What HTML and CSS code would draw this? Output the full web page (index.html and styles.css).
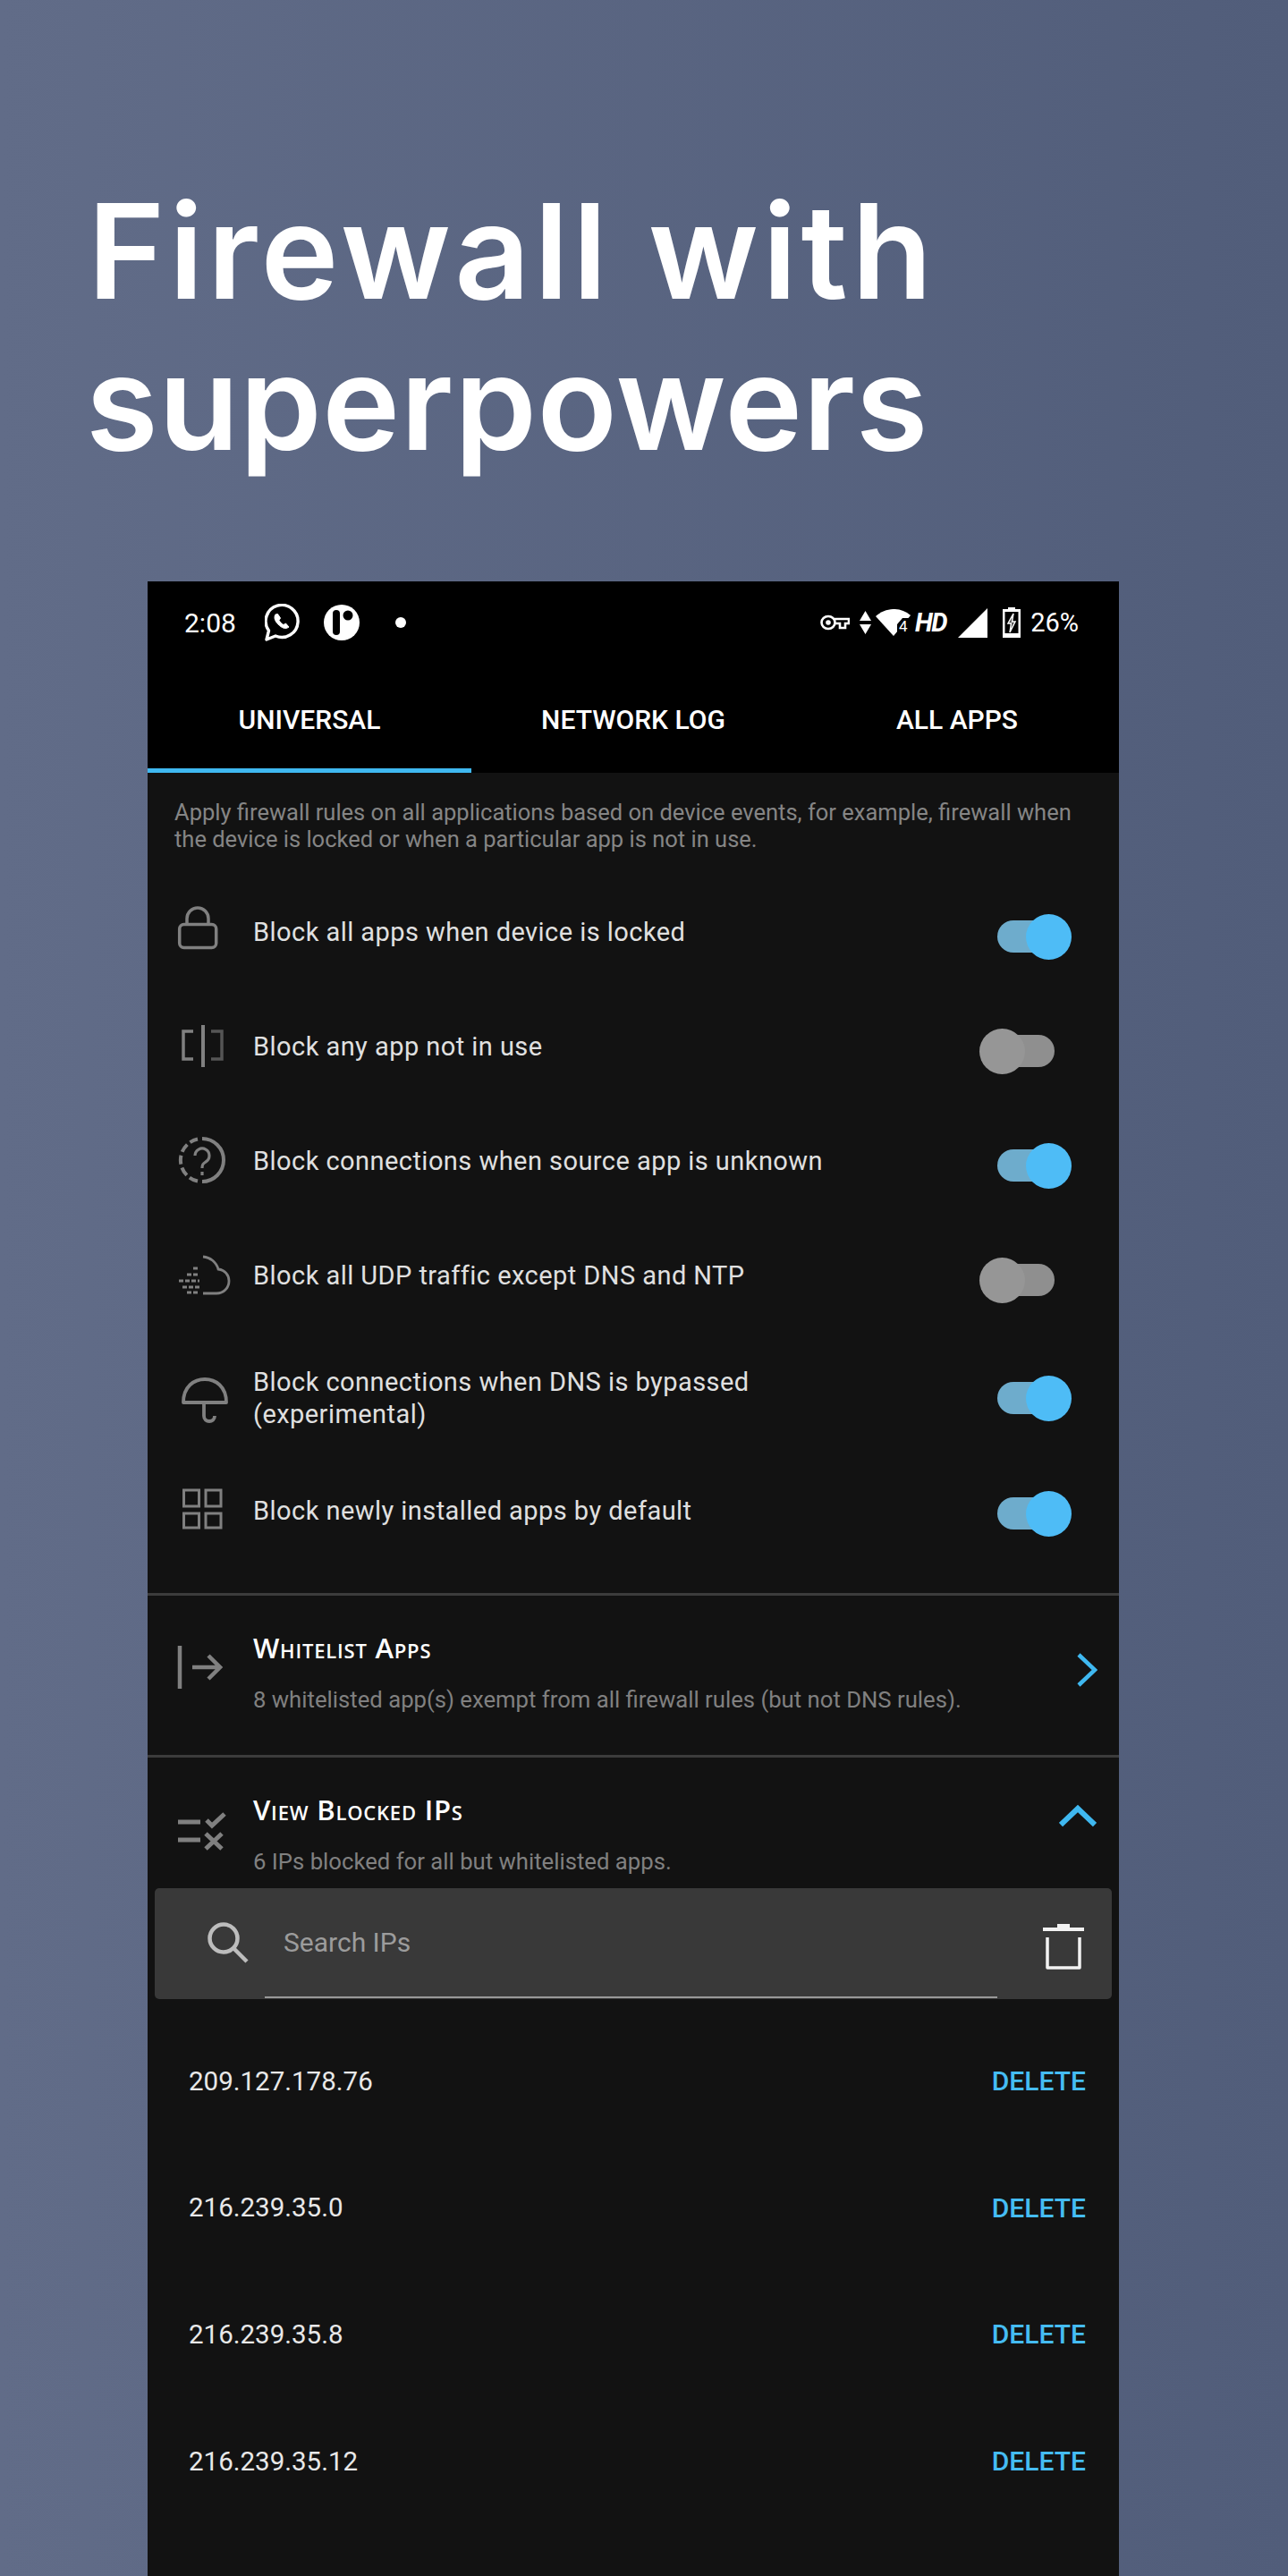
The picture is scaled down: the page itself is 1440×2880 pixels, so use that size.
FILE: index.html
```html
<!DOCTYPE html>
<html lang="en">
<head>
  <meta charset="UTF-8" />
  <title>Firewall with superpowers</title>
  <link rel="stylesheet" href="styles.css">
</head>
<body>
  <h1 class="headline"><span class="line-one">Firewall with</span><span class="line-two">superpowers</span></h1>

  <div class="phone">
    <div class="status-bar">
      <div class="status-left">
        <span class="time">2:08</span>
        <svg class="st-whatsapp" width="40" height="42" viewBox="0 0 40 42" fill="none" stroke="#fff" stroke-width="3.4"><path d="M2 40l2.500-10A18 18 0 1 1 12 36z" stroke-linejoin="round"/><path d="M12 12c-2 3-1 7 3 11s8 6 12 3l-3.500-4-2.500 1.500c-2-1-4-3-5-5l1.500-2.500-3-4.500z" fill="#fff" stroke-width="1"/></svg>
        <svg class="st-app" width="40" height="40" viewBox="0 0 40 40"><ellipse cx="20" cy="20" rx="20" ry="20" fill="#fff"/><rect x="10" y="6" width="8" height="28" rx="4" fill="#000"/><circle cx="27" cy="12" r="5.500" fill="#000"/></svg>
        <span class="dot"></span>
      </div>
      <div class="status-right">
        <svg class="st-key" width="33" height="18" viewBox="0 0 33 18" fill="none" stroke="#fff" stroke-width="2.600"><ellipse cx="9" cy="9" rx="7.500" ry="7"/><circle cx="9" cy="9" r="1.500"/><path d="M16 5h16v5h-4v5h-6v-5h-6"/></svg>
        <svg class="st-updown" width="13" height="26" viewBox="0 0 13 26" fill="#fff"><path d="M6.500 0L13 11H0zM6.500 26L0 15h13z"/></svg>
        <svg class="st-wifi" width="39" height="30" viewBox="0 0 39 30"><path d="M0 8C11-2 28-3 39 7L20 30z" fill="#fff"/><path d="M39 10H30L24 17v13h15z" fill="#000"/><text x="26" y="25" class="wifi-four">4</text></svg>
        <span class="hd">HD</span>
        <svg class="st-signal" width="33" height="33" viewBox="0 0 33 33"><path d="M33 0v33H0z" fill="#fff"/></svg>
        <svg class="st-battery" width="20" height="34" viewBox="0 0 20 34"><path d="M6 0h8v2h6v32H0V2h6z" fill="#fff"/><rect x="2.500" y="5" width="15" height="24" fill="#000"/><path d="M12 7L6 18h3.500L8 28l6-12h-3.500z" fill="#444" stroke="#fff" stroke-width="1.500"/></svg>
        <span class="battery-pct">26%</span>
      </div>
    </div>

    <div class="tabs">
      <div class="tab tab-active">UNIVERSAL</div>
      <div class="tab">NETWORK LOG</div>
      <div class="tab">ALL APPS</div>
    </div>

    <div class="content">
      <p class="intro">Apply firewall rules on all applications based on device events, for example, firewall when the device is locked or when a particular app is not in use.</p>

      <div class="rules">
        <div class="rule">
          <svg class="rule-icon" width="70" height="70" viewBox="0 0 70 70" fill="none" stroke="#808080" stroke-width="3.500"><rect x="3.700" y="23.500" width="41" height="26" rx="5"/><path d="M12 23v-6a12 12 0 0 1 24 0v6"/></svg>
          <span class="rule-label">Block all apps when device is locked</span>
          <span class="toggle on"><span class="knob"></span></span>
        </div>
        <div class="rule">
          <svg class="rule-icon" width="70" height="70" viewBox="0 0 70 70" fill="none" stroke="#808080" stroke-width="3.500"><path d="M19 15H8v31h11"/><path d="M30 8v47" stroke-width="4"/><path d="M39 15h12v31H39" stroke="#555"/></svg>
          <span class="rule-label">Block any app not in use</span>
          <span class="toggle"><span class="knob"></span></span>
        </div>
        <div class="rule">
          <svg class="rule-icon" width="70" height="70" viewBox="0 0 70 70" fill="none" stroke="#808080" stroke-width="4"><path d="M29 7a24 24 0 0 1 0 48"/><path d="M24 54.500a24 24 0 0 1 0-47" stroke-dasharray="10 4"/><path d="M21 26a8 8 0 1 1 12 7c-3 2-4 3-4 7" stroke-width="3.200"/><path d="M29 44v4" stroke-width="3.200"/></svg>
          <span class="rule-label">Block connections when source app is unknown</span>
          <span class="toggle on"><span class="knob"></span></span>
        </div>
        <div class="rule">
          <svg class="rule-icon" width="70" height="70" viewBox="0 0 70 70" fill="none" stroke="#808080" stroke-width="2.800"><path d="M30 11a19 19 0 0 1 17 14c8 1 12 7 12 13 0 8-6 14-14 14H30"/><path d="M19 24h7M12 31h14M3 38h23M7 45h19M12 51h14" stroke-dasharray="5 2"/></svg>
          <span class="rule-label">Block all UDP traffic except DNS and NTP</span>
          <span class="toggle"><span class="knob"></span></span>
        </div>
        <div class="rule rule-two">
          <svg class="rule-icon" width="70" height="70" viewBox="0 0 70 70" fill="none" stroke="#808080" stroke-width="3.800"><path d="M8 40C8 22 20 14 32 14S56 22 56 40z" stroke-linejoin="round"/><path d="M31 40v15c0 8 12 8 12 0"/></svg>
          <span class="rule-label">Block connections when DNS is bypassed<br>(experimental)</span>
          <span class="toggle on"><span class="knob"></span></span>
        </div>
        <div class="rule rule-last">
          <svg class="rule-icon" width="70" height="70" viewBox="0 0 70 70" fill="none" stroke="#808080" stroke-width="3"><rect x="8.500" y="11" width="17" height="18"/><rect x="33" y="11" width="17" height="18"/><rect x="8.500" y="37" width="17" height="16"/><rect x="33" y="37" width="17" height="16"/></svg>
          <span class="rule-label">Block newly installed apps by default</span>
          <span class="toggle on"><span class="knob"></span></span>
        </div>
      </div>

      <div class="section">
        <svg class="whitelist-icon" width="52" height="52" viewBox="0 0 52 52" fill="none" stroke="#808080" stroke-width="4.500"><path d="M4 2v48"/><path d="M18 26h32M36 13l13 13-13 13"/></svg>
        <div class="section-text">
          <div class="section-title">Whitelist Apps</div>
          <div class="section-desc">8 whitelisted app(s) exempt from all firewall rules (but not DNS rules).</div>
        </div>
        <svg class="chevron" width="24" height="38" viewBox="0 0 24 38" fill="none" stroke="#3fb8f0" stroke-width="4.500"><path d="M3 2l18 17L3 36"/></svg>
      </div>

      <div class="section section-open">
        <svg class="blocked-icon" width="56" height="44" viewBox="0 0 56 44" fill="none" stroke="#808080" stroke-width="5"><path d="M2 12h25M2 32h25"/><path d="M34 10l6 6L54 3M33 25l18 17M51 25L33 42"/></svg>
        <div class="section-text">
          <div class="section-title">View Blocked IPs</div>
          <div class="section-desc">6 IPs blocked for all but whitelisted apps.</div>
        </div>
        <svg class="chevron-up" width="42" height="26" viewBox="0 0 42 26" fill="none" stroke="#3fb8f0" stroke-width="6"><path d="M2 23L21 5l19 18"/></svg>
      </div>

      <div class="search">
        <svg class="search-icon" width="46" height="46" viewBox="0 0 46 46" fill="none" stroke="#bdbdbd" stroke-width="4.500"><circle cx="18" cy="18" r="15.500"/><path d="M29 29l15 15"/></svg>
        <div class="search-field">Search IPs</div>
        <svg class="trash" width="46" height="52" viewBox="0 0 46 52" fill="none" stroke="#f2f2f2" stroke-width="3.500"><path d="M0 7h46" stroke-width="4"/><path d="M16 3h14" stroke-width="4"/><path d="M5 16v34h36V16" stroke-linejoin="round"/></svg>
      </div>

      <div class="ip-list">
        <div class="ip-row"><span class="ip">209.127.178.76</span><span class="delete">DELETE</span></div>
        <div class="ip-row"><span class="ip">216.239.35.0</span><span class="delete">DELETE</span></div>
        <div class="ip-row"><span class="ip">216.239.35.8</span><span class="delete">DELETE</span></div>
        <div class="ip-row"><span class="ip">216.239.35.12</span><span class="delete">DELETE</span></div>
      </div>
    </div>
  </div>
</body>
</html>
```

FILE: styles.css
```css
html, body {
  margin: 0;
  height: 2880px;
  overflow: hidden;
}
body {
  background: linear-gradient(90deg, #616c88 0%, #515d7a 100%);
  font-family: Roboto, sans-serif;
  color: #fff;
}
.headline {
  margin: 0;
  padding: 196px 0 0 96px;
  height: 650px;
  box-sizing: border-box;
  font-family: Inter, sans-serif;
  font-weight: 600;
  font-size: 147px;
  line-height: 169px;
}
.line-one, .line-two {
  display: block;
  white-space: nowrap;
}
.line-one {
  margin-left: 2px;
  letter-spacing: 4.500px;
}
.line-two {
  letter-spacing: 0.600px;
}
.phone {
  margin: 0 0 0 165px;
  width: 1086px;
  height: 2230px;
  background: #121212;
  overflow: hidden;
}
.status-bar {
  height: 100px;
  box-sizing: border-box;
  background: #000;
  display: flex;
  justify-content: space-between;
  align-items: center;
  padding: 0 45px 8px 41px;
}
.status-left, .status-right {
  display: flex;
  align-items: center;
}
.time {
  font-size: 30px;
  margin-right: 32px;
}
.st-app {
  margin-left: 26px;
}
.dot {
  width: 12px;
  height: 12px;
  border-radius: 50%;
  background: #fff;
  margin-left: 40px;
}
.st-updown {
  margin-left: 11px;
}
.st-wifi {
  margin-left: 5px;
}
.wifi-four {
  font-size: 17px;
  fill: #fff;
  font-family: Roboto, sans-serif;
}
.hd {
  font-size: 29px;
  font-weight: 700;
  font-style: italic;
  letter-spacing: -1.500px;
  margin-left: 5px;
}
.st-signal {
  margin-left: 13px;
}
.st-battery {
  margin-left: 17px;
}
.battery-pct {
  font-size: 29px;
  margin-left: 11px;
}
.tabs {
  height: 114px;
  background: #000;
  display: flex;
}
.tab {
  flex: 1;
  display: flex;
  align-items: center;
  justify-content: center;
  padding-bottom: 6px;
  box-sizing: border-box;
  font-size: 30px;
  font-weight: 500;
}
.tab-active {
  border-bottom: 5px solid #3fb8f0;
  padding-bottom: 1px;
}
.intro {
  margin: 0;
  padding: 29px 40px 0 30px;
  font-size: 25.500px;
  line-height: 30px;
  color: #858585;
}
.rules {
  padding: 30px 0 28px;
}
.rule {
  height: 128px;
  display: flex;
  align-items: center;
  padding-left: 32px;
}
.rule-two {
  height: 136px;
}
.rule-last {
  height: 122px;
}
.rule-icon {
  flex: none;
  margin: 0 16px 4px 0;
}
.rule-label {
  font-size: 29px;
  line-height: 36px;
  letter-spacing: 0.450px;
  color: #e0e0e0;
  margin-bottom: 10px;
}
.rule-two .rule-icon {
  margin-bottom: 0;
}
.rule-two .rule-label {
  margin-bottom: 0;
}
.rule-last .rule-label {
  margin-bottom: 6px;
}
.toggle {
  flex: none;
  position: relative;
  margin: 0 72px 0 auto;
  width: 64px;
  height: 36px;
  border-radius: 18px;
  background: #8f8f8f;
}
.knob {
  position: absolute;
  left: -20px;
  top: -7.500px;
  width: 51px;
  height: 51px;
  border-radius: 50%;
  background: #969696;
}
.toggle.on {
  background: #6eaccc;
}
.toggle.on .knob {
  left: 32px;
  background: #4ebcf6;
}
.section {
  display: flex;
  align-items: flex-start;
  box-sizing: border-box;
  border-top: 3px solid #3c3c3c;
  height: 181px;
  padding-left: 32px;
}
.section-open {
  height: 149px;
}
.whitelist-icon {
  flex: none;
  margin: 54px 34px 0 0;
}
.blocked-icon {
  flex: none;
  margin: 60px 30px 0 0;
}
.section-title {
  padding-top: 40px;
  font-family: "Open Sans", sans-serif;
  font-size: 31px;
  line-height: 36px;
  font-weight: 600;
  letter-spacing: 0.800px;
  font-variant: small-caps;
}
.section-desc {
  margin-top: 25px;
  font-size: 25.700px;
  line-height: 30px;
  color: #808080;
}
.chevron {
  flex: none;
  margin: 64px 24px 0 auto;
}
.chevron-up {
  flex: none;
  margin: 52px 25px 0 auto;
}
.search {
  margin: 0 8px;
  height: 124px;
  padding-left: 59px;
  background: #393939;
  border-radius: 5px;
  display: flex;
  align-items: flex-start;
}
.search-icon {
  flex: none;
  margin-top: 38px;
}
.search-field {
  flex: none;
  margin-left: 18px;
  width: 819px;
  height: 123px;
  box-sizing: border-box;
  padding: 43px 0 0 21px;
  border-bottom: 2px solid #999;
  font-size: 30px;
  color: #9c9c9c;
}
.trash {
  flex: none;
  margin: 39px 0 0 51px;
}
.ip-list {
  padding-top: 21px;
}
.ip-row {
  height: 141.600px;
  display: flex;
  align-items: center;
  justify-content: space-between;
  padding: 0 37px 0 46px;
}
.ip {
  font-size: 29.500px;
  color: #e8e8e8;
}
.delete {
  font-size: 30px;
  font-weight: 500;
  color: #45bcf3;
}
```
